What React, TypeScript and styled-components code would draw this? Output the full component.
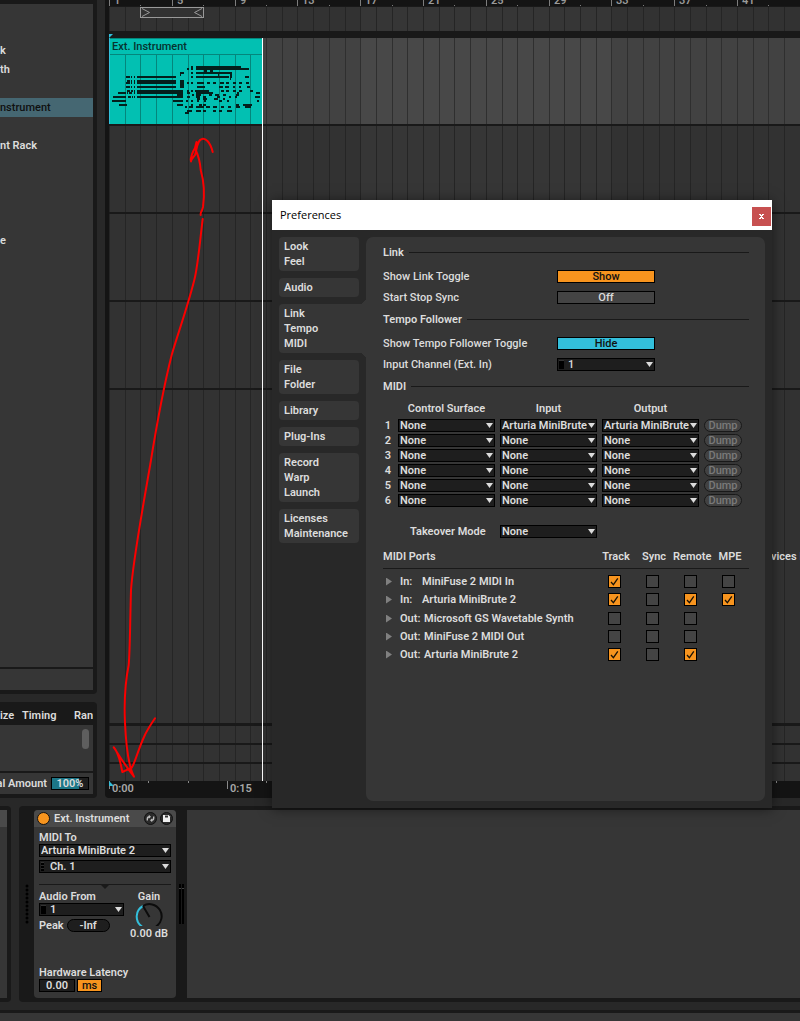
import React, { useState } from 'react';
import styled, { createGlobalStyle, css } from 'styled-components';

const c = {
  frame: '#282828',
  well: '#191919',
  ruler: '#141414',
  surface: '#363636',
  field: '#1e1e1e',
  text: '#dcdcdc',
  orange: '#f7941e',
  blue: '#33bfdb',
  clip: '#02c0b2',
};

const GlobalStyle = createGlobalStyle`
  *, *::before, *::after { box-sizing: border-box; }
  body {
    margin: 0;
    background: ${c.frame};
    color: ${c.text};
    font-family: Roboto, sans-serif;
    font-size: 11px;
    font-weight: 600;
    line-height: 15px;
  }
  button, input, select { font: inherit; color: inherit; margin: 0; }
`;

const Page = styled.div`
  position: relative;
  display: flex;
  flex-direction: column;
  min-height: 100vh;
  overflow: hidden;
`;

const Workspace = styled.main`
  display: flex;
  flex: 1;
  gap: 8px;
`;

/* ---------- left column ---------- */

const Sidebar = styled.aside`
  display: flex;
  flex-direction: column;
  flex: none;
  gap: 8px;
  width: 97px;
`;

const SidePanel = styled.section<{ $grow?: boolean }>`
  display: flex;
  flex-direction: column;
  flex: ${(p) => (p.$grow ? 1 : 'none')};
  gap: 2px;
  padding: ${(p) => (p.$grow ? '4px 4px 4px 0' : '0 4px 4px 0')};
  background: ${c.well};
  border-radius: ${(p) => (p.$grow ? '0 0 4px 0' : '0 4px 4px 0')};
  overflow: hidden;
`;

const DeviceList = styled.ul`
  flex: 1;
  margin: 0;
  padding: 37px 0 0;
  list-style: none;
  background: ${c.surface};
`;

const DeviceItem = styled.li<{ $selected?: boolean }>`
  height: 19px;
  line-height: 19px;
  white-space: nowrap;
  ${(p) =>
    p.$selected &&
    css`
      background: #456772;
      color: #101010;
      font-weight: 500;
    `}
`;

const ListFooter = styled.div`
  height: 21px;
  background: ${c.surface};
`;

const GrooveHeader = styled.div`
  display: grid;
  grid-template-columns: 22px 52px 19px;
  height: 21px;
  padding-top: 6px;
  white-space: nowrap;
  overflow: hidden;
`;

const GrooveList = styled.div`
  display: flex;
  justify-content: flex-end;
  height: 46px;
  padding: 4px;
  background: ${c.surface};
`;

const ScrollThumb = styled.div`
  width: 7px;
  height: 20px;
  border-radius: 4px;
  background: #5e5e5e;
`;

const GrooveFooter = styled.div`
  display: flex;
  align-items: center;
  justify-content: flex-end;
  gap: 4px;
  height: 21px;
  padding-right: 4px;
  white-space: nowrap;
  background: ${c.surface};
`;

const AmountField = styled.div`
  flex: none;
  width: 38px;
  height: 13px;
  border: 1px solid #000;
  background: linear-gradient(90deg, #1c7687 27px, ${c.field} 27px);
  line-height: 12px;
  text-align: center;
`;

/* ---------- arrangement ---------- */

const Arrangement = styled.section`
  position: relative;
  display: flex;
  flex: 1;
  flex-direction: column;
  min-width: 0;
  padding-left: 4px;
  background: ${c.ruler};
  border-radius: 0 0 0 4px;
  overflow: hidden;
`;

const BarRuler = styled.div`
  position: relative;
  height: 7px;
  border-bottom: 1px solid ${c.well};
  color: #9a9a9a;
  overflow: hidden;
`;

const RulerMark = styled.span<{ $x: number }>`
  position: absolute;
  left: ${(p) => p.$x}px;
  bottom: 0;
  height: 15px;
  padding-left: 5px;
  line-height: 19px;
`;

const Lane = styled.div<{ $height?: number; $gap?: number; $active?: boolean }>`
  position: relative;
  ${(p) => (p.$height ? `height: ${p.$height}px;` : 'flex: 1;')}
  border-bottom: ${(p) => p.$gap ?? 2}px solid ${c.well};
  background: ${(p) => (p.$active ? '#424242' : '#323232')};
`;

const LaneSvg = styled.svg`
  position: absolute;
  inset: 0;
  width: 100%;
  height: 100%;
`;

const Clip = styled.div`
  position: absolute;
  top: 0;
  left: 0;
  width: 153px;
  height: 86px;
  background: ${c.clip};
  border-left: 1px solid ${c.blue};
  overflow: hidden;
`;

const ClipName = styled.div`
  position: relative;
  height: 17px;
  padding-left: 2px;
  border-top: 1px solid #04867c;
  border-bottom: 1px solid #04867c;
  background: ${c.clip};
  color: #06332f;
  font-weight: 500;
  line-height: 16px;
`;

const TimeRuler = styled.div`
  position: relative;
  height: 17px;
  color: #a8a8a8;
`;

const TimeLabel = styled.span<{ $x: number }>`
  position: absolute;
  left: ${(p) => p.$x}px;
  padding-left: 3px;
`;

const InsertMarker = styled.div`
  position: absolute;
  top: 38px;
  bottom: 17px;
  left: 157px;
  width: 1px;
  background: #fff;
`;

const DropHint = styled.p`
  position: absolute;
  top: 549px;
  left: 666px;
  margin: 0;
  white-space: nowrap;
`;

const Annotation = styled.svg`
  position: absolute;
  top: 0;
  left: 0;
  pointer-events: none;
`;

/* ---------- shared controls ---------- */

const SelectBox = styled.div<{ $width?: number }>`
  position: relative;
  width: ${(p) => (p.$width ? `${p.$width}px` : '100%')};
  height: 13px;
  &::after {
    content: '';
    position: absolute;
    top: 4px;
    right: 2px;
    width: 7px;
    height: 5px;
    background: ${c.text};
    clip-path: polygon(0 0, 100% 0, 50% 100%);
    pointer-events: none;
  }
`;

const NativeSelect = styled.select<{ $inset?: boolean }>`
  display: block;
  appearance: none;
  width: 100%;
  height: 13px;
  padding: 0 9px 0 ${(p) => (p.$inset ? 10 : 1)}px;
  border: 1px solid #000;
  border-radius: 0;
  background: ${c.field};
  line-height: 11px;
  overflow: hidden;
`;

const ChannelMark = styled.span<{ $dotted?: boolean }>`
  position: absolute;
  top: 2px;
  left: 2px;
  width: ${(p) => (p.$dotted ? 3 : 5)}px;
  height: 9px;
  background: ${(p) => (p.$dotted ? 'repeating-linear-gradient(#000 0 2px, #2a2a2a 2px 3px)' : '#000')};
  border-top: 1px solid #333;
`;

function Select(props: {
  label: string;
  value: string;
  width?: number;
  channel?: 'solid' | 'dotted';
  id?: string;
}) {
  return (
    <SelectBox $width={props.width}>
      <NativeSelect id={props.id} aria-label={props.label} defaultValue={props.value} $inset={!!props.channel}>
        <option>{props.value}</option>
      </NativeSelect>
      {props.channel && <ChannelMark $dotted={props.channel === 'dotted'} />}
    </SelectBox>
  );
}

const CheckBox = styled.span`
  position: relative;
  display: block;
  width: 13px;
  height: 13px;
  margin-left: 11px;
`;

const CheckInput = styled.input`
  display: block;
  appearance: none;
  width: 13px;
  height: 13px;
  border: 1px solid #000;
  background: #444;
  &:checked { background: ${c.orange}; }
  &:checked + svg { display: block; }
`;

const CheckMark = styled.svg`
  position: absolute;
  inset: 0;
  display: none;
  pointer-events: none;
`;

function Check({ label, on }: { label: string; on: boolean }) {
  return (
    <CheckBox>
      <CheckInput type="checkbox" aria-label={label} defaultChecked={on} />
      <CheckMark width="13" height="13" viewBox="0 0 13 13">
        <path d="M3 7l2.4 2.6L9.8 3.4" fill="none" stroke="#1a1206" strokeWidth="1.3" />
      </CheckMark>
    </CheckBox>
  );
}

/* ---------- preferences window ---------- */

const Window = styled.div`
  position: absolute;
  top: 200px;
  left: 272px;
  width: 500px;
  background: ${c.frame};
  box-shadow: 0 1px 12px rgba(0, 0, 0, 0.5);
`;

const TitleBar = styled.header`
  display: flex;
  align-items: center;
  justify-content: space-between;
  height: 30px;
  padding: 0 1px 0 8px;
  background: #fff;
  color: #000;
  font: 400 11px/16px 'Open Sans', 'Noto Sans', sans-serif;
`;

const CloseButton = styled.button`
  width: 19px;
  height: 19px;
  margin-top: 2px;
  padding: 0;
  border: 0;
  background: #c75050;
  line-height: 0;
`;

const WindowBody = styled.div`
  display: flex;
  gap: 7px;
  padding: 7px;
`;

const TabList = styled.nav`
  display: flex;
  flex-direction: column;
  gap: 7px;
  width: 80px;
`;

const Tab = styled.button<{ $selected?: boolean }>`
  position: relative;
  padding: 2px 5px;
  border: 0;
  border-radius: ${(p) => (p.$selected ? '4px 0 0 4px' : '4px')};
  background: ${c.surface};
  text-align: left;
  white-space: pre-line;
  ${(p) =>
    p.$selected &&
    css`
      &::before, &::after {
        content: '';
        position: absolute;
        left: 100%;
        width: 7px;
      }
      &::before {
        top: 0;
        bottom: 0;
        background: ${c.surface};
      }
      &::after {
        top: -7px;
        bottom: -7px;
        background:
          radial-gradient(circle at 0 0, transparent 7px, ${c.surface} 7px) top / 7px 7px no-repeat,
          radial-gradient(circle at 0 100%, transparent 7px, ${c.surface} 7px) bottom / 7px 7px no-repeat;
      }
    `}
`;

const Panel = styled.div`
  flex: 1;
  min-width: 0;
  min-height: 564px;
  padding: 8px 16px 8px 17px;
  border-radius: 7px;
  background: ${c.surface};
`;

const SectionTitle = styled.h2`
  display: flex;
  align-items: center;
  gap: 5px;
  height: 15px;
  margin: 0 0 10px;
  font-size: 11px;
  font-weight: 600;
  &::after {
    content: '';
    flex: 1;
    height: 1px;
    background: ${c.well};
  }
`;

const SettingRow = styled.div`
  display: grid;
  grid-template: 13px / 174px 98px;
  margin-bottom: 8px;
  font-weight: 500;
  line-height: 13px;
`;

const Toggle = styled.button<{ $tone?: string }>`
  height: 13px;
  padding: 0;
  border: 1px solid #000;
  background: ${(p) => p.$tone ?? '#444'};
  color: ${(p) => (p.$tone ? '#111' : c.text)};
  font-weight: 500;
  line-height: 11px;
`;

const SurfaceTable = styled.table`
  table-layout: fixed;
  width: 369px;
  margin: -5px 0 16px -5px;
  border-spacing: 5px 2px;
  th, td { padding: 0; height: 13px; line-height: 13px; font-weight: 600; }
  thead th { height: 16px; line-height: 15px; vertical-align: top; }
  tbody th { text-align: center; }
`;

const DumpButton = styled.button`
  display: block;
  width: 38px;
  height: 13px;
  padding: 0;
  border: 1px solid ${c.well};
  border-radius: 7px;
  background: #424242;
  color: #7a7a7a;
  font-weight: 500;
  line-height: 11px;
`;

const TakeoverRow = styled.div`
  display: grid;
  grid-template: 13px / 90px 97px;
  margin: 0 0 10px 27px;
  line-height: 13px;
`;

const PortTable = styled.table`
  table-layout: fixed;
  width: 366px;
  border-collapse: collapse;
  th, td { padding: 0; height: 18px; font-weight: 600; text-align: left; line-height: 18px; }
  thead th { height: 20px; border-bottom: 1px solid ${c.well}; text-align: center; line-height: 17px; vertical-align: top; }
  thead th:first-child { text-align: left; }
  tbody::before { content: ''; display: block; height: 4px; }
  tbody + tbody::before { height: 1px; }
`;

const PortName = styled.span`
  display: flex;
  align-items: center;
  padding-left: 3px;
  white-space: nowrap;
`;

const Disclosure = styled.button`
  width: 6px;
  height: 8px;
  margin-right: 8px;
  padding: 0;
  border: 0;
  background: #808080;
  clip-path: polygon(0 0, 100% 50%, 0 100%);
`;

const Direction = styled.span<{ $out?: boolean }>`
  width: ${(p) => (p.$out ? 24 : 22)}px;
`;

/* ---------- device chain ---------- */

const DeviceRow = styled.section`
  display: flex;
  gap: 8px;
  height: 196px;
  margin: 8px 0;
`;

const ClipViewEdge = styled.div`
  width: 11px;
  padding: 4px 4px 4px 0;
  border-radius: 0 4px 4px 0;
  background: ${c.well};
  &::before {
    content: '';
    display: block;
    height: 100%;
    background: linear-gradient(#4a4a4a 17px, ${c.surface} 17px);
  }
`;

const Chain = styled.div`
  display: grid;
  grid-template-columns: 15px 142px 11px 1fr;
  flex: 1;
  padding: 4px 0;
  border-radius: 4px 0 0 4px;
  background: ${c.well};
`;

const Meter = styled.svg`
  display: block;
  width: 100%;
  height: 100%;
`;

const Device = styled.article`
  display: flex;
  flex-direction: column;
  border-radius: 4px;
  background: ${c.surface};
  overflow: hidden;
`;

const DeviceHeader = styled.header`
  display: flex;
  align-items: center;
  gap: 3px;
  height: 17px;
  padding: 0 3px;
  background: #4a4a4a;
`;

const DeviceTitle = styled.h3`
  flex: 1;
  margin: 0 0 0 1px;
  font-size: 11px;
  font-weight: 600;
  white-space: nowrap;
`;

const RoundButton = styled.button<{ $on?: boolean }>`
  display: grid;
  place-items: center;
  width: 13px;
  height: 13px;
  padding: 0;
  border: 1px solid #111;
  border-radius: 50%;
  background: ${(p) => (p.$on ? c.orange : '#2a2a2a')};
`;

const DeviceBody = styled.div`
  display: flex;
  flex: 1;
  flex-direction: column;
  padding: 3px 5px 6px;
`;

const Stack = styled.div<{ $gap: number }>`
  display: flex;
  flex-direction: column;
  gap: ${(p) => p.$gap}px;
`;

const Label = styled.label`
  display: block;
  height: 14px;
`;

const Divider = styled.div`
  position: relative;
  height: 1px;
  margin: 11px 0 4px;
  background: ${c.well};
  &::after {
    content: '';
    position: absolute;
    left: calc(50% - 5px);
    width: 10px;
    height: 5px;
    background: ${c.well};
    clip-path: polygon(0 0, 100% 0, 50% 100%);
  }
`;

const AudioRow = styled.div`
  display: flex;
  justify-content: space-between;
`;

const PeakRow = styled.div`
  display: flex;
  align-items: center;
  gap: 3px;
  height: 13px;
`;

const Pill = styled.button`
  width: 43px;
  height: 13px;
  padding: 0;
  border: 1px solid #000;
  border-radius: 7px;
  background: ${c.field};
  line-height: 11px;
`;

const GainBox = styled.div`
  display: flex;
  flex-direction: column;
  align-items: center;
  width: 44px;
  white-space: nowrap;
`;

const Latency = styled.div`
  margin-top: auto;
`;

const LatencyRow = styled.div`
  display: flex;
  gap: 2px;
`;

const LatencyInput = styled.input`
  width: 36px;
  height: 13px;
  padding: 0;
  border: 1px solid #000;
  background: ${c.field};
  line-height: 11px;
  text-align: center;
`;

const UnitButton = styled(Toggle)`
  width: 25px;
`;

const ChainSpace = styled.div`
  background: ${c.surface};
`;

const StatusBar = styled.footer`
  height: 11px;
  border-top: 3px solid ${c.well};
  background: ${c.surface};
`;

/* ---------- data ---------- */

const BAR_COUNT = 120;
const barX = (bar: number) => Math.round((bar * 628) / 40);

const browserItems = ['k', 'th', '', 'nstrument', '', 'nt Rack', '', '', '', '', 'e'];

const tabs = [
  'Look\nFeel',
  'Audio',
  'Link\nTempo\nMIDI',
  'File\nFolder',
  'Library',
  'Plug-Ins',
  'Record\nWarp\nLaunch',
  'Licenses\nMaintenance',
];

const inputPorts = [
  { name: 'MiniFuse 2 MIDI In', on: [true, false, false, false] },
  { name: 'Arturia MiniBrute 2', on: [true, false, true, true] },
];
const outputPorts = [
  { name: 'Microsoft GS Wavetable Synth', on: [false, false, false] },
  { name: 'MiniFuse 2 MIDI Out', on: [false, false, false] },
  { name: 'Arturia MiniBrute 2', on: [true, false, true] },
];
const portColumns = ['Track', 'Sync', 'Remote', 'MPE'];

/* each row: y, then pairs of x and length */
const notes: number[][] = [
  [28, 82, 2, 87, 45],
  [30, 78, 2, 82, 2, 87, 53],
  [32, 95, 3, 101, 3],
  [34, 71, 4, 82, 2, 87, 36],
  [36, 71, 1, 109, 1, 121, 2],
  [38, 17, 4, 22, 1, 25, 1, 28, 39, 82, 2, 87, 33, 121, 2, 136, 4],
  [40, 121, 1],
  [42, 18, 3, 22, 1, 25, 1, 28, 39, 71, 4],
  [44, 17, 4, 22, 1, 25, 1, 28, 39, 71, 4, 78, 2, 82, 2, 88, 7, 98, 3, 104, 3, 111, 4, 117, 3, 124, 3, 130, 3, 137, 3],
  [46, 71, 4],
  [48, 17, 4, 22, 1, 25, 1, 28, 39, 71, 4, 88, 8, 110, 4, 116, 4, 124, 2, 130, 2, 138, 3],
  [52, 18, 3, 22, 2, 25, 1, 28, 46, 78, 2, 82, 2, 86, 14, 112, 3, 117, 3, 124, 3, 130, 3, 141, 3],
  [54, 9, 8, 18, 1, 20, 3, 25, 1, 28, 46, 78, 3, 87, 12, 98, 6, 128, 2, 147, 4],
  [56, 68, 6, 83, 2, 87, 5, 100, 3, 106, 4, 114, 3, 127, 3],
  [58, 4, 13, 19, 3, 23, 1, 25, 1, 28, 46, 78, 3, 87, 4, 94, 3, 108, 3, 120, 2, 126, 2, 146, 5],
  [60, 88, 3, 94, 4, 105, 4, 114, 2],
  [62, 3, 14, 64, 10, 77, 2, 82, 2, 88, 2, 95, 2, 110, 3, 118, 2, 148, 2],
  [66, 10, 8, 68, 6, 82, 2, 90, 3, 94, 3, 127, 3, 134, 8, 141, 2],
  [68, 76, 2, 80, 4, 87, 8, 97, 4, 104, 4, 112, 3, 119, 3, 127, 4, 136, 6],
  [72, 78, 5, 87, 5, 94, 3, 104, 3, 110, 3, 118, 5],
  [74, 76, 4],
];

/* ---------- pieces ---------- */

function Grid({ active }: { active?: boolean }) {
  return (
    <LaneSvg shapeRendering="crispEdges" aria-hidden="true">
      {[16, 48, 80, 112].map((bar) => (
        <rect key={bar} x={barX(bar)} y="0" width={barX(16)} height="100%" fill={active ? '#484848' : '#363636'} />
      ))}
      {Array.from({ length: BAR_COUNT }, (_, i) => (
        <rect key={i} x={barX(i)} y="0" width="1" height="100%" fill={active ? '#2f2f2f' : '#252525'} />
      ))}
    </LaneSvg>
  );
}

function MidiClip() {
  return (
    <Clip>
      <LaneSvg viewBox="1 0 152 86" shapeRendering="crispEdges" aria-hidden="true">
        {Array.from({ length: 9 }, (_, i) => (
          <rect key={i} x={barX(i + 1)} y="17" width="1" height="69" fill="#04867c" />
        ))}
        {notes.map(([y, ...runs]) =>
          runs.map((x, i) =>
            i % 2 === 0 ? <rect key={`${y}-${i}`} x={x} y={y} width={runs[i + 1]} height="2" fill="#031f1c" /> : null,
          ),
        )}
      </LaneSvg>
      <ClipName>Ext. Instrument</ClipName>
    </Clip>
  );
}

function ArrangementView() {
  return (
    <Arrangement>
      <BarRuler>
        <LaneSvg shapeRendering="crispEdges" aria-hidden="true">
          {Array.from({ length: BAR_COUNT / 2 }, (_, i) => (
            <rect key={i} x={barX(i * 2)} y={i % 2 ? 5 : 0} width="1" height={i % 2 ? 1 : 6} fill="#7d7d7d" />
          ))}
        </LaneSvg>
        {Array.from({ length: BAR_COUNT / 4 }, (_, i) => (
          <RulerMark key={i} $x={barX(i * 4)}>
            {i * 4 + 1}
          </RulerMark>
        ))}
      </BarRuler>
      <Lane $height={31} $gap={7}>
        <Grid />
        <LaneSvg aria-hidden="true">
          <rect x="31.5" y="0.5" width="63" height="10" fill="#323232" stroke="#999" />
          <path d="M33 1.500L40.500 5.500L33 9.500M93 1.500L85.500 5.500L93 9.500" fill="none" stroke="#999" />
        </LaneSvg>
      </Lane>
      <Lane $height={88} $active>
        <Grid active />
        <MidiClip />
      </Lane>
      <Lane $height={88}>
        <Grid />
      </Lane>
      <Lane $height={88}>
        <Grid />
      </Lane>
      <Lane $height={88}>
        <Grid />
      </Lane>
      <Lane $gap={3}>
        <Grid />
      </Lane>
      <Lane $height={19}>
        <Grid />
      </Lane>
      <Lane $height={19}>
        <Grid />
      </Lane>
      <Lane $height={17} $gap={0}>
        <Grid />
      </Lane>
      <TimeRuler>
        <LaneSvg shapeRendering="crispEdges" aria-hidden="true">
          {Array.from({ length: 60 }, (_, i) => (
            <rect key={i} x={Math.round((i * 157) / 4)} y="0" width="1" height={i % 3 ? 2 : 8} fill="#8a8a8a" />
          ))}
          <path d="M0 0L5 5H0Z" fill={c.blue} shapeRendering="auto" />
        </LaneSvg>
        <TimeLabel $x={0}>0:00</TimeLabel>
        <TimeLabel $x={118}>0:15</TimeLabel>
      </TimeRuler>
      <InsertMarker />
      <DropHint>vices Here</DropHint>
      <Annotation width="160" height="40" viewBox="0 0 160 40">
        <path d="M4 34H8L4 38Z" fill={c.blue} />
      </Annotation>
    </Arrangement>
  );
}

function SurfaceRow({ index }: { index: number }) {
  const device = index === 1 ? 'Arturia MiniBrute' : 'None';
  return (
    <tr>
      <th scope="row">{index}</th>
      <td>
        <Select label={`Control surface ${index}`} value="None" />
      </td>
      <td>
        <Select label={`Input ${index}`} value={device} />
      </td>
      <td>
        <Select label={`Output ${index}`} value={device} />
      </td>
      <td>
        <DumpButton disabled>Dump</DumpButton>
      </td>
    </tr>
  );
}

function PortRows({ ports, out }: { ports: { name: string; on: boolean[] }[]; out?: boolean }) {
  return (
    <tbody>
      {ports.map((port) => (
        <tr key={port.name}>
          <th scope="row">
            <PortName>
              <Disclosure aria-label={`Expand ${port.name}`} />
              <Direction $out={out}>{out ? 'Out:' : 'In:'}</Direction>
              {port.name}
            </PortName>
          </th>
          {portColumns.map((column, i) => (
            <td key={column}>
              {i < port.on.length && <Check label={`${port.name} ${column}`} on={port.on[i]} />}
            </td>
          ))}
        </tr>
      ))}
    </tbody>
  );
}

function Preferences() {
  const [tab, setTab] = useState(2);
  return (
    <Window role="dialog" aria-label="Preferences">
      <TitleBar>
        Preferences
        <CloseButton aria-label="Close">
          <svg width="19" height="19" viewBox="0 0 19 19" shapeRendering="crispEdges" aria-hidden="true">
            <path
              d="M7 7h2v1h1v-1h2v1h-1v1h-1v1h1v1h1v1h-2v-1h-1v1h-2v-1h1v-1h1v-1h-1v-1h-1z"
              fill="#fff"
            />
          </svg>
        </CloseButton>
      </TitleBar>
      <WindowBody>
        <TabList>
          {tabs.map((name, i) => (
            <Tab key={name} $selected={i === tab} onClick={() => setTab(i)}>
              {name}
            </Tab>
          ))}
        </TabList>
        <Panel>
          <SectionTitle>Link</SectionTitle>
          <SettingRow>
            <span id="link-toggle">Show Link Toggle</span>
            <Toggle $tone={c.orange} aria-describedby="link-toggle">Show</Toggle>
          </SettingRow>
          <SettingRow>
            <span id="start-stop">Start Stop Sync</span>
            <Toggle aria-describedby="start-stop">Off</Toggle>
          </SettingRow>
          <SectionTitle>Tempo Follower</SectionTitle>
          <SettingRow>
            <span id="follower-toggle">Show Tempo Follower Toggle</span>
            <Toggle $tone={c.blue} aria-describedby="follower-toggle">Hide</Toggle>
          </SettingRow>
          <SettingRow>
            <label htmlFor="input-channel">Input Channel (Ext. In)</label>
            <Select id="input-channel" label="Input Channel (Ext. In)" value="1" channel="solid" />
          </SettingRow>
          <SectionTitle>MIDI</SectionTitle>
          <SurfaceTable>
            <colgroup>
              <col style={{ width: 10 }} />
              <col style={{ width: 97 }} />
              <col style={{ width: 97 }} />
              <col style={{ width: 97 }} />
              <col style={{ width: 38 }} />
            </colgroup>
            <thead>
              <tr>
                <td />
                <th scope="col">Control Surface</th>
                <th scope="col">Input</th>
                <th scope="col">Output</th>
                <td />
              </tr>
            </thead>
            <tbody>
              {[1, 2, 3, 4, 5, 6].map((n) => (
                <SurfaceRow key={n} index={n} />
              ))}
            </tbody>
          </SurfaceTable>
          <TakeoverRow>
            <label htmlFor="takeover">Takeover Mode</label>
            <Select id="takeover" label="Takeover Mode" value="None" />
          </TakeoverRow>
          <PortTable>
            <colgroup>
              <col />
              <col style={{ width: 38 }} />
              <col style={{ width: 38 }} />
              <col style={{ width: 38 }} />
              <col style={{ width: 38 }} />
            </colgroup>
            <thead>
              <tr>
                <th scope="col">MIDI Ports</th>
                {portColumns.map((name) => (
                  <th key={name} scope="col">
                    {name}
                  </th>
                ))}
              </tr>
            </thead>
            <PortRows ports={inputPorts} />
            <PortRows ports={outputPorts} out />
          </PortTable>
        </Panel>
      </WindowBody>
    </Window>
  );
}

function ExtInstrument() {
  return (
    <Device>
      <DeviceHeader>
        <RoundButton $on aria-label="Device on" />
        <DeviceTitle>Ext. Instrument</DeviceTitle>
        <RoundButton aria-label="Hot-swap">
          <svg width="11" height="11" viewBox="0 0 11 11" aria-hidden="true">
            <path d="M2.300 7.500V6Q2.300 3.800 4.500 3.800M8.700 3.500V5Q8.700 7.200 6.500 7.200" fill="none" stroke="#bbb" strokeWidth="1.400" />
            <path d="M3.800 1.800L6 3.800L3.800 5.800ZM7.200 5.200L5 7.200L7.200 9.200Z" fill="#bbb" />
          </svg>
        </RoundButton>
        <RoundButton aria-label="Save preset">
          <svg width="11" height="11" viewBox="0 0 11 11" aria-hidden="true">
            <path d="M2 2H7.500L9 3.500V9H2Z" fill="#eee" />
            <path d="M4 2.500H7V4.500H4Z" fill="#333" />
          </svg>
        </RoundButton>
      </DeviceHeader>
      <DeviceBody>
        <Label htmlFor="midi-to">MIDI To</Label>
        <Stack $gap={3}>
          <Select id="midi-to" label="MIDI To" value="Arturia MiniBrute 2" />
          <Select label="MIDI channel" value="Ch. 1" channel="dotted" />
        </Stack>
        <Divider />
        <AudioRow>
          <Stack $gap={3}>
            <div>
              <Label htmlFor="audio-from">Audio From</Label>
              <Select id="audio-from" label="Audio From" value="1" width={85} channel="solid" />
            </div>
            <PeakRow>
              Peak
              <Pill>-Inf</Pill>
            </PeakRow>
          </Stack>
          <GainBox>
            <Label as="span">Gain</Label>
            <svg width="28" height="23" viewBox="0 0 28 23" role="img" aria-label="Gain knob">
              <path d="M7 23.500A12 12 0 0 1 8 3" fill="none" stroke={c.blue} strokeWidth="2" />
              <path d="M8 3A12 12 0 0 1 21 23.500M14.500 14L8 3" fill="none" stroke="#0c0c0c" strokeWidth="2" />
            </svg>
            <span>0.00 dB</span>
          </GainBox>
        </AudioRow>
        <Latency>
          <Label htmlFor="latency">Hardware Latency</Label>
          <LatencyRow>
            <LatencyInput id="latency" defaultValue="0.00" />
            <UnitButton $tone={c.orange}>ms</UnitButton>
          </LatencyRow>
        </Latency>
      </DeviceBody>
    </Device>
  );
}

export default function App() {
  return (
    <Page>
      <GlobalStyle />
      <Workspace>
        <Sidebar>
          <SidePanel $grow>
            <DeviceList>
              {browserItems.map((name, i) => (
                <DeviceItem key={i} $selected={i === 3}>
                  {name}
                </DeviceItem>
              ))}
            </DeviceList>
            <ListFooter />
          </SidePanel>
          <SidePanel>
            <GrooveHeader>
              <span>ize</span>
              <span>Timing</span>
              <span>Ran</span>
            </GrooveHeader>
            <GrooveList>
              <ScrollThumb />
            </GrooveList>
            <GrooveFooter>
              <span>al Amount</span>
              <AmountField>100%</AmountField>
            </GrooveFooter>
          </SidePanel>
        </Sidebar>
        <ArrangementView />
      </Workspace>
      <DeviceRow>
        <ClipViewEdge />
        <Chain>
          <Meter viewBox="0 0 15 188" aria-hidden="true">
            {Array.from({ length: 10 }, (_, i) => (
              <circle key={i} cx="8" cy={76 + i * 4} r="1.500" fill="#000" />
            ))}
          </Meter>
          <ExtInstrument />
          <Meter viewBox="0 0 11 188" shapeRendering="crispEdges" aria-hidden="true">
            <path d="M3 74H5V114H3ZM6 74H8V114H6Z" fill="#000" />
            <path d="M3 78H5V79H3ZM6 78H8V79H6Z" fill="#444" />
          </Meter>
          <ChainSpace />
        </Chain>
      </DeviceRow>
      <StatusBar />
      <Annotation width="280" height="800" viewBox="0 0 280 800" fill="none" stroke="#fa0000" strokeWidth="2" strokeLinecap="round" strokeLinejoin="round">
        <path d="M212.700 152C210 141 205 138 202 139C197 140 197 149 195 155C193 158 191 159 191 161.500C190 158 193 151 195 148L196.500 142L195.700 150C199 157 200 161 200.700 170C205 185 204 200 203 207C202 212 200 212 200.700 215" />
        <path d="M202.700 219C200 240 198 266 194.300 280C187 309 177 336 171.700 355C162 393 155 435 150 466C144 501 133 560 131 590C130 625 130 650 128.700 665C126 678 124 700 125 723C126 745 128 765 134 776.700C124 764 119 755 113.700 747.300C119 753 121 765 122.300 772L131.700 767.700C135 763 138 750 144 737Q147 730 155 718.300" />
      </Annotation>
      <Preferences />
    </Page>
  );
}
